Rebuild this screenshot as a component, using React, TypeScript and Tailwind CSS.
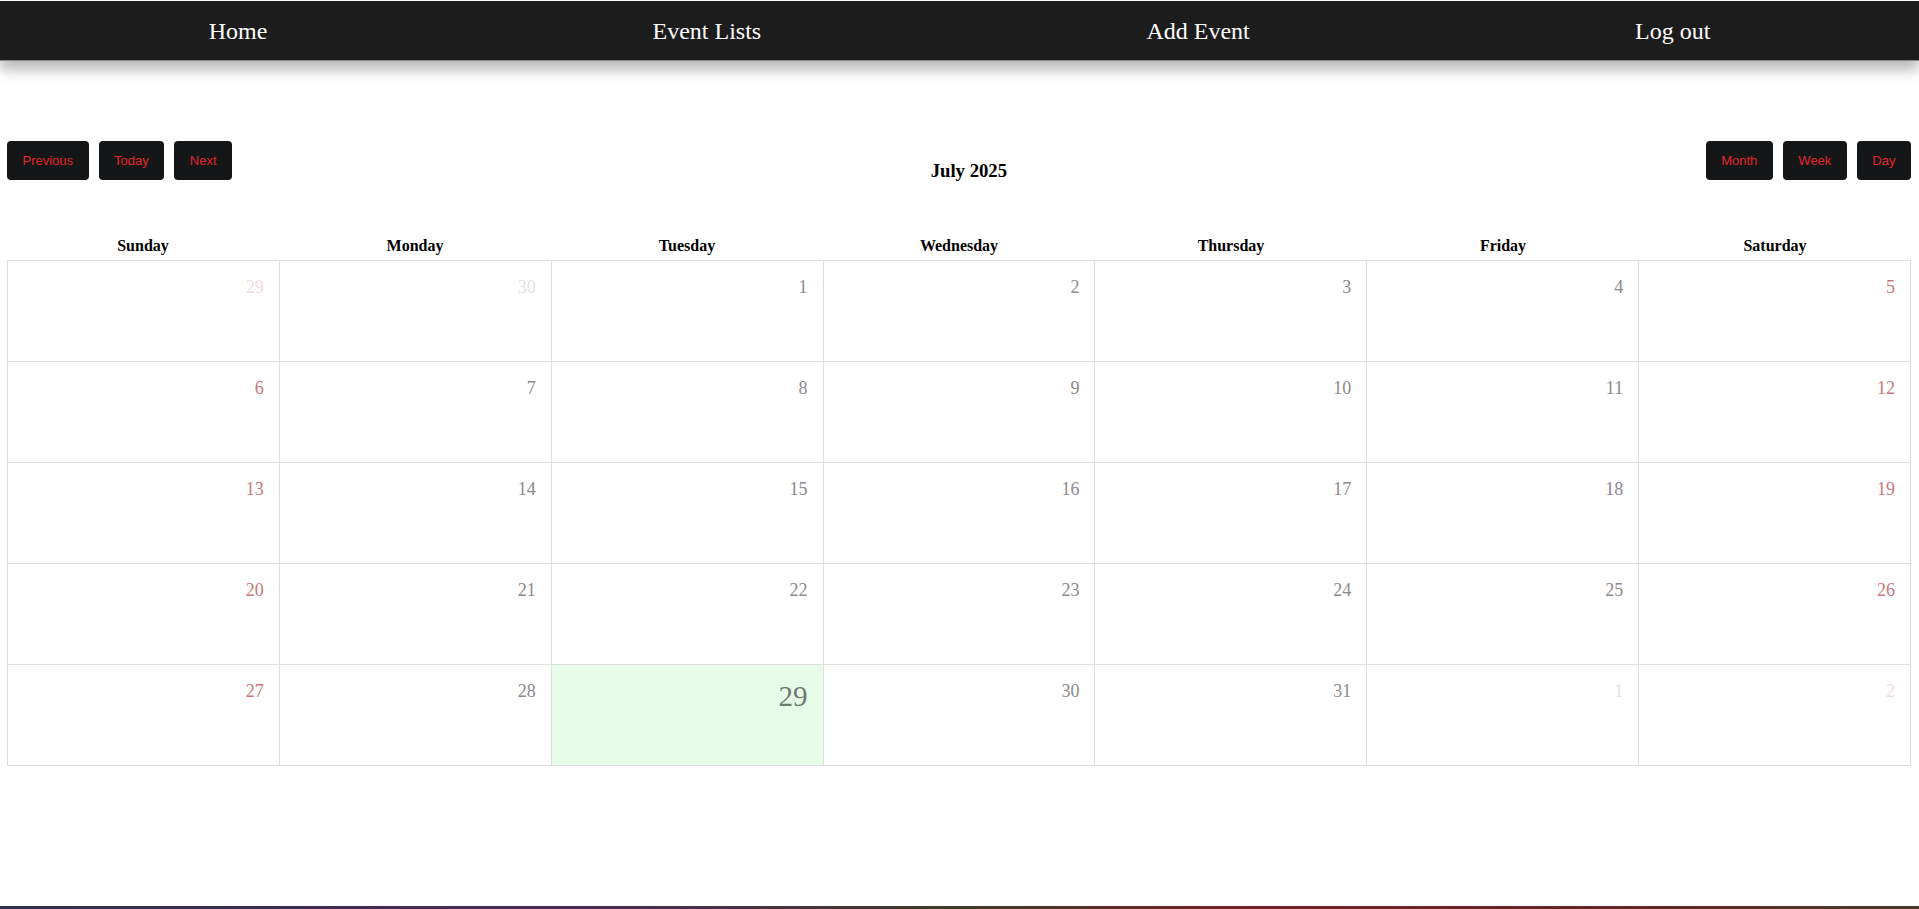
import React from 'react'

const navItems = ['Home', 'Event Lists', 'Add Event', 'Log out']
const dayNames = ['Sunday', 'Monday', 'Tuesday', 'Wednesday', 'Thursday', 'Friday', 'Saturday']

type Cell = { day: number; off?: boolean; today?: boolean }

const weeks: Cell[][] = [
  [{ day: 29, off: true }, { day: 30, off: true }, { day: 1 }, { day: 2 }, { day: 3 }, { day: 4 }, { day: 5 }],
  [{ day: 6 }, { day: 7 }, { day: 8 }, { day: 9 }, { day: 10 }, { day: 11 }, { day: 12 }],
  [{ day: 13 }, { day: 14 }, { day: 15 }, { day: 16 }, { day: 17 }, { day: 18 }, { day: 19 }],
  [{ day: 20 }, { day: 21 }, { day: 22 }, { day: 23 }, { day: 24 }, { day: 25 }, { day: 26 }],
  [{ day: 27 }, { day: 28 }, { day: 29, today: true }, { day: 30 }, { day: 31 }, { day: 1, off: true }, { day: 2, off: true }],
]

function ToolButton({ label }: { label: string }) {
  return (
    <button className="h-[39px] px-[15.5px] rounded-[4px] bg-[#151617] text-[#e3262b] text-[13px] font-['Liberation_Sans',Arial,sans-serif] flex items-center">
      {label}
    </button>
  )
}

function DayCell({ cell, col }: { cell: Cell; col: number }) {
  const weekend = col === 0 || col === 6
  let color = 'text-[#8a8a8a]'
  if (cell.off) color = weekend ? 'text-[#f2dcdc]' : 'text-[#e6e2e2]'
  else if (weekend) color = 'text-[#c8777a]'
  if (cell.today) color = 'text-[#6e7a6e]'

  return (
    <div
      className={`h-[101px] border-r border-b border-[#dedede] pt-[16px] px-[15px] flex justify-end items-start ${
        cell.today ? 'bg-[#e6fbe8]' : 'bg-white'
      }`}
    >
      <span className={`${color} ${cell.today ? 'text-[29px] leading-[33px] -mt-px' : 'text-[18px] leading-[21px]'}`}>
        {cell.day}
      </span>
    </div>
  )
}

export default function App() {
  return (
    <div className="min-h-screen bg-white font-['Liberation_Serif','Times_New_Roman',serif] pt-px">
      <nav className="h-[60px] bg-[#1c1c1c] border-b border-[#8a8a8a] shadow-[0_9px_12px_rgba(0,0,0,0.28)] flex items-center justify-around px-4">
        {navItems.map((item) => (
          <a key={item} className="text-white text-[24px] leading-[28px] cursor-pointer">
            {item}
          </a>
        ))}
      </nav>

      <div className="pl-[7px] pr-[8px] pt-[80px]">
        <div className="flex items-start justify-between">
          <div className="flex gap-[10px]">
            <ToolButton label="Previous" />
            <ToolButton label="Today" />
            <ToolButton label="Next" />
          </div>
          <h3 className="my-[18.72px] text-[18.72px] leading-[21.5px] font-bold text-black">July 2025</h3>
          <div className="flex gap-[10px]">
            <ToolButton label="Month" />
            <ToolButton label="Week" />
            <ToolButton label="Day" />
          </div>
        </div>

        <div className="grid grid-cols-7 mt-[37px] pb-[5px]">
          {dayNames.map((d) => (
            <div key={d} className="text-center text-[16px] leading-[18px] font-bold text-black">
              {d}
            </div>
          ))}
        </div>

        <div className="grid grid-cols-7 border-l border-t border-[#dedede]">
          {weeks.map((week, wi) =>
            week.map((cell, ci) => <DayCell key={`${wi}-${ci}`} cell={cell} col={ci} />)
          )}
        </div>
      </div>

      <footer className="mt-[140px] h-[40px] bg-[linear-gradient(90deg,#2e3050,#4b2b55_30%,#3f3b2b_50%,#702424_65%,#5e2a22_85%,#4a3a2c)]" />
    </div>
  )
}
